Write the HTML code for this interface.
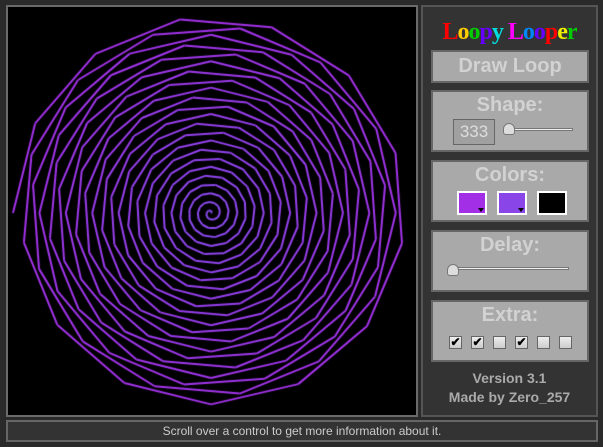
<!DOCTYPE html>
<html><head><meta charset="utf-8"><style>
*{margin:0;padding:0;box-sizing:border-box}
body{width:603px;height:447px;background:#2a2a2a;position:relative;overflow:hidden;font-family:"Liberation Sans",Arial,sans-serif}
#cv{position:absolute;left:6px;top:5px;width:412px;height:412px;border:2px solid #6a6a6a;background:#000}
#panel{position:absolute;left:421px;top:5px;width:177px;height:412px;background:#333;border:2px solid #555}
.box{position:absolute;left:8px;width:158px;background:#a9a9a9;border:2px solid #666;text-align:center;color:#d2d2d2;font-weight:bold;font-size:20px}
.logo{position:absolute;left:0;width:100%;top:12px;text-align:center;font-family:"Liberation Serif",serif;font-weight:bold;font-size:24px;letter-spacing:-1px}
.sw{position:absolute;top:29px;width:30px;height:24px;border:2px solid #fff}
.sw:after{content:"";position:absolute;right:1px;bottom:1px;border:3px solid transparent;border-top:4px solid #000;border-bottom:0}
.cb{position:absolute;top:34px;width:13px;height:13px;background:linear-gradient(#eee,#ccc);border:1px solid #666;font-size:12px;line-height:11px;color:#000;text-align:center}
.track{position:absolute;height:3px;background:#eee;border:1px solid #777}
.thumb{position:absolute;width:12px;height:12px;background:#ddd;border:1px solid #777;border-radius:6px 6px 3px 3px}
#bar{position:absolute;left:6px;top:420px;width:592px;height:22px;background:#333;border:2px solid #666;color:#ccc;font-size:12px;text-align:center;line-height:18px}
</style></head><body>
<div id="cv"><canvas id="c" width="408" height="408"></canvas></div>
<div id="panel">
 <div class="logo"><span style="color:#f00">L</span><span style="color:#fc0">o</span><span style="color:#0c0">o</span><span style="color:#60f">p</span><span style="color:#0dd">y</span> <span style="color:#f0f">L</span><span style="color:#08f">o</span><span style="color:#60f">o</span><span style="color:#f00">p</span><span style="color:#ee0">e</span><span style="color:#0c0">r</span></div>
 <div class="box" style="top:43px;height:33px;line-height:29px">Draw Loop</div>
 <div class="box" style="top:83px;height:62px"><div style="line-height:26px">Shape:</div>
  <div style="position:absolute;left:20px;top:27px;width:42px;height:26px;border:1px solid #666;background:#a0a0a0;font-weight:normal;font-size:17px;line-height:24px;color:#ddd">333</div>
  <div class="track" style="left:72px;top:36px;width:68px"></div><div class="thumb" style="left:70px;top:31px"></div>
 </div>
 <div class="box" style="top:153px;height:62px"><div style="line-height:26px">Colors:</div>
  <div class="sw" style="left:24px;background:#a22ee6"></div>
  <div class="sw" style="left:64px;background:#8a45e8"></div>
  <div class="sw" style="left:104px;background:#000"></div>
 </div>
 <div class="box" style="top:223px;height:62px"><div style="line-height:26px">Delay:</div>
  <div class="track" style="left:20px;top:35px;width:116px"></div><div class="thumb" style="left:14px;top:32px"></div>
 </div>
 <div class="box" style="top:293px;height:62px"><div style="line-height:26px">Extra:</div>
  <div class="cb" style="left:16px">✔</div><div class="cb" style="left:38px">✔</div><div class="cb" style="left:60px"></div><div class="cb" style="left:82px">✔</div><div class="cb" style="left:104px"></div><div class="cb" style="left:126px"></div>
 </div>
 <div style="position:absolute;top:362px;width:100%;text-align:center;color:#aaa;font-weight:bold;font-size:14px;line-height:19px">Version 3.1<br>Made by Zero_257</div>
</div>
<div id="bar">Scroll over a control to get more information about it.</div>
<script>
var c=document.getElementById('c').getContext('2d');
var cx=203,cy=206,n=300,k=0.66;
c.lineWidth=2;c.lineJoin='round';
var px=cx,py=cy;
for(var i=1;i<=n;i++){var a=i*333*Math.PI/180,r=i*k;var x=cx+r*Math.cos(a),y=cy+r*Math.sin(a);
var t=i/n;var R=Math.round(138+(165-138)*t),G=Math.round(75+(50-75)*t),B=Math.round(240+(235-240)*t);
c.strokeStyle='rgb('+R+','+G+','+B+')';c.beginPath();c.moveTo(px,py);c.lineTo(x,y);c.stroke();px=x;py=y;}
</script>
</body></html>
